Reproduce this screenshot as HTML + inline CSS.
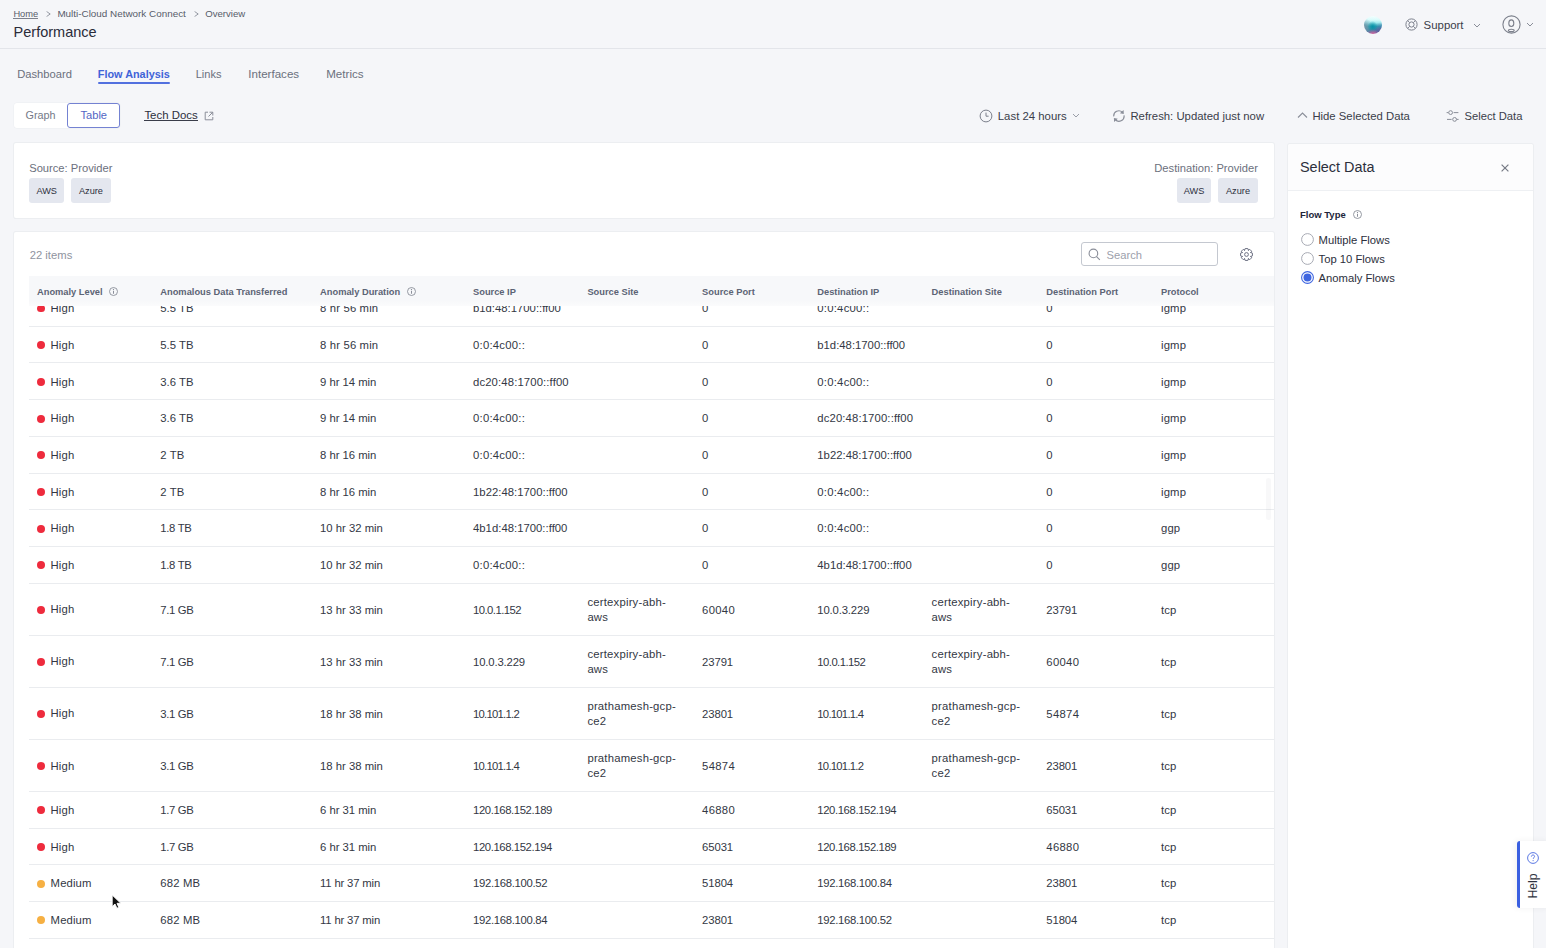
<!DOCTYPE html>
<html><head><meta charset="utf-8"><title>Performance</title>
<style>
html,body{margin:0;padding:0;}
body{width:1546px;height:948px;overflow:hidden;position:relative;background:#f5f6f9;font-family:"Liberation Sans", sans-serif;}
.t{position:absolute;white-space:nowrap;}
.b{position:absolute;}
</style></head><body>
<div class="t" style="left:13.40px;top:10.00px;font-size:9.3px;line-height:9.3px;color:#575c6a;font-weight:400;">Home</div>
<div class="b" style="left:13.40px;top:18.00px;width:24.90px;height:0.80px;background:#7d818c"></div>
<svg class="b" style="left:45.50px;top:10.60px" width="5" height="6" viewBox="0 0 5 6" fill="none"><path d="M0.6 0.5L4.2 3L0.6 5.5" stroke="#8a8f9a" stroke-width="0.9"/></svg>
<div class="t" style="left:57.40px;top:9.00px;font-size:9.89px;line-height:9.89px;color:#575c6a;font-weight:400;">Multi-Cloud Network Connect</div>
<svg class="b" style="left:193.60px;top:10.60px" width="5" height="6" viewBox="0 0 5 6" fill="none"><path d="M0.6 0.5L4.2 3L0.6 5.5" stroke="#8a8f9a" stroke-width="0.9"/></svg>
<div class="t" style="left:205.20px;top:9.00px;font-size:9.62px;line-height:9.62px;color:#575c6a;font-weight:400;">Overview</div>
<div class="t" style="left:13.60px;top:25.00px;font-size:14.5px;line-height:14.5px;color:#2a2c3a;font-weight:400;">Performance</div>
<div class="b" style="left:0.00px;top:48.00px;width:1546.00px;height:1.00px;background:#e3e5ea"></div>
<div class="b" style="left:1364px;top:16px;width:18px;height:18px;border-radius:50%;background:radial-gradient(circle at 50% 105%, #e3679c 0%, rgba(227,103,156,0) 28%),radial-gradient(ellipse at 48% 60%, #0890a6 0%, rgba(8,144,166,0) 38%),radial-gradient(circle at 0% 62%, #8095a8 0%, rgba(128,149,168,0) 42%),radial-gradient(circle at 100% 95%, #6a55a0 0%, rgba(106,85,160,0) 45%),linear-gradient(#f4ffff 0%, #d8fbfb 22%, #9fe9ee 38%, #22aab8 58%, #3a86a8 78%, #7067a5 100%)"></div>
<svg class="b" style="left:1404.50px;top:17.80px" width="13" height="13" viewBox="0 0 13 13" fill="none"><circle cx="6.5" cy="6.5" r="5.6" stroke="#7c808c" stroke-width="1"/><circle cx="6.5" cy="6.5" r="2.6" stroke="#7c808c" stroke-width="1"/><path d="M2.6 2.6L4.6 4.6M10.4 2.6L8.4 4.6M2.6 10.4L4.6 8.4M10.4 10.4L8.4 8.4" stroke="#7c808c" stroke-width="0.9"/></svg>
<div class="t" style="left:1423.60px;top:20.00px;font-size:11.42px;line-height:11.42px;color:#3a3d4a;font-weight:400;">Support</div>
<svg class="b" style="left:1472.50px;top:22.50px" width="8" height="5" viewBox="0 0 8 5" fill="none"><path d="M1 1L4 4L7 1" stroke="#8a8e99" stroke-width="1"/></svg>
<svg class="b" style="left:1501.50px;top:15.00px" width="19" height="19" viewBox="0 0 19 19" fill="none"><circle cx="9.5" cy="9.5" r="8.6" stroke="#7c808c" stroke-width="1.1"/><ellipse cx="9.3" cy="8.2" rx="2.5" ry="3.3" stroke="#7c808c" stroke-width="1.1"/><ellipse cx="9.3" cy="15.4" rx="2.9" ry="1.2" stroke="#7c808c" stroke-width="1.1"/></svg>
<svg class="b" style="left:1525.50px;top:21.80px" width="8" height="5" viewBox="0 0 8 5" fill="none"><path d="M1 1L4 4L7 1" stroke="#8a8e99" stroke-width="1"/></svg>
<div class="t" style="left:17.20px;top:69.00px;font-size:11.2px;line-height:11.2px;color:#6b707d;font-weight:400;">Dashboard</div>
<div class="t" style="left:97.80px;top:69.00px;font-size:10.86px;line-height:10.86px;color:#4063d8;font-weight:700;">Flow Analysis</div>
<div class="b" style="left:97.80px;top:82.30px;width:72.10px;height:2.00px;background:#5270df;border-radius:1px"></div>
<div class="t" style="left:195.70px;top:69.00px;font-size:11.05px;line-height:11.05px;color:#6b707d;font-weight:400;">Links</div>
<div class="t" style="left:248.30px;top:69.00px;font-size:11.59px;line-height:11.59px;color:#6b707d;font-weight:400;">Interfaces</div>
<div class="t" style="left:326.20px;top:68.00px;font-size:11.6px;line-height:11.6px;color:#6b707d;font-weight:400;">Metrics</div>
<div class="b" style="left:14.20px;top:103.20px;width:105.40px;height:24.40px;background:#fff;border-radius:3px;box-shadow:0 0 0 0.5px #eceef2"></div>
<div class="b" style="left:67.20px;top:103.20px;width:52.40px;height:24.40px;background:#fff;border:1px solid #7482d2;border-radius:3px;box-sizing:border-box"></div>
<div class="t" style="left:25.60px;top:110.00px;font-size:10.8px;line-height:10.8px;color:#747987;font-weight:400;">Graph</div>
<div class="t" style="left:80.40px;top:110.00px;font-size:11.17px;line-height:11.17px;color:#5366c4;font-weight:400;">Table</div>
<div class="t" style="left:144.40px;top:110.00px;font-size:11.42px;line-height:11.42px;color:#2c2f3c;font-weight:400;">Tech Docs</div>
<div class="b" style="left:144.40px;top:120.00px;width:53.40px;height:1.00px;background:#3a3d4a"></div>
<svg class="b" style="left:203.50px;top:110.80px" width="10" height="10" viewBox="0 0 10 10" fill="none"><path d="M4 1.2H1.2V8.8H8.8V6" stroke="#8a8e99" stroke-width="1"/><path d="M5.5 1.2H8.8V4.5M8.8 1.2L4.5 5.5" stroke="#8a8e99" stroke-width="1"/></svg>
<svg class="b" style="left:978.50px;top:108.80px" width="14" height="14" viewBox="0 0 14 14" fill="none"><circle cx="7" cy="7" r="5.9" stroke="#7c808c" stroke-width="1"/><path d="M7 3.6V7.2H9.6" stroke="#7c808c" stroke-width="1"/></svg>
<div class="t" style="left:997.80px;top:111.00px;font-size:11.39px;line-height:11.39px;color:#3a3d4a;font-weight:400;">Last 24 hours</div>
<svg class="b" style="left:1072.00px;top:113.00px" width="8" height="5" viewBox="0 0 8 5" fill="none"><path d="M1 1L4 4L7 1" stroke="#9a9ea8" stroke-width="1"/></svg>
<svg class="b" style="left:1111.50px;top:109.00px" width="14" height="14" viewBox="0 0 14 14" fill="none"><path d="M1.8 7.4A5 5 0 0 1 10.4 3.4M12 6.4A5 5 0 0 1 3.2 10.4" stroke="#8a8e99" stroke-width="1.2"/><path d="M11.6 0.9L11.8 4.9L7.9 4.3Z M2.1 13.1L1.9 9.1L5.8 9.7Z" fill="#8a8e99"/></svg>
<div class="t" style="left:1130.40px;top:111.00px;font-size:11.35px;line-height:11.35px;color:#3a3d4a;font-weight:400;">Refresh: Updated just now</div>
<svg class="b" style="left:1296.50px;top:112.00px" width="11" height="7" viewBox="0 0 11 7" fill="none"><path d="M1 5.5L5.5 1L10 5.5" stroke="#8a8e99" stroke-width="1.1"/></svg>
<div class="t" style="left:1312.40px;top:111.00px;font-size:11.32px;line-height:11.32px;color:#3a3d4a;font-weight:400;">Hide Selected Data</div>
<svg class="b" style="left:1445.50px;top:108.80px" width="14" height="14" viewBox="0 0 14 14" fill="none"><circle cx="4.6" cy="3.6" r="1.9" stroke="#8a8e99" stroke-width="1"/><circle cx="8.6" cy="10.4" r="1.9" stroke="#8a8e99" stroke-width="1"/><path d="M7.6 3.6H12.4M1 10.4H5.6M0.6 3.6H2.4M10.8 10.4H12.6" stroke="#8a8e99" stroke-width="1"/></svg>
<div class="t" style="left:1464.60px;top:111.00px;font-size:11.2px;line-height:11.2px;color:#3a3d4a;font-weight:400;">Select Data</div>
<div class="b" style="left:14.00px;top:143.30px;width:1260.00px;height:74.80px;background:#fff;border-radius:2px;box-shadow:0 0 0 1px #eceef1, 0 1px 0 0 #e4e6ea"></div>
<div class="t" style="left:29.20px;top:163.00px;font-size:11.18px;line-height:11.18px;color:#6b707d;font-weight:400;">Source: Provider</div>
<div class="b" style="left:29.20px;top:178.30px;width:35.00px;height:24.30px;background:#e4e7ef;border-radius:3px"></div>
<div class="t" style="left:-53.30px;width:200px;text-align:center;top:187.00px;font-size:9.2px;line-height:9.2px;color:#2d3040;font-weight:400;">AWS</div>
<div class="b" style="left:70.90px;top:178.30px;width:40.10px;height:24.30px;background:#e4e7ef;border-radius:3px"></div>
<div class="t" style="left:-9.05px;width:200px;text-align:center;top:187.00px;font-size:9.2px;line-height:9.2px;color:#2d3040;font-weight:400;">Azure</div>
<div class="t" style="right:288.00px;top:163.00px;font-size:11.18px;line-height:11.18px;color:#6b707d;font-weight:400;">Destination: Provider</div>
<div class="b" style="left:1176.70px;top:178.30px;width:34.70px;height:24.30px;background:#e4e7ef;border-radius:3px"></div>
<div class="t" style="left:1094.05px;width:200px;text-align:center;top:187.00px;font-size:9.2px;line-height:9.2px;color:#2d3040;font-weight:400;">AWS</div>
<div class="b" style="left:1217.80px;top:178.30px;width:40.40px;height:24.30px;background:#e4e7ef;border-radius:3px"></div>
<div class="t" style="left:1138.00px;width:200px;text-align:center;top:187.00px;font-size:9.2px;line-height:9.2px;color:#2d3040;font-weight:400;">Azure</div>
<div class="b" style="left:14.00px;top:231.60px;width:1260.00px;height:728.40px;background:#fff;border-radius:2px;box-shadow:0 0 0 1px #eceef1, 0 -0.5px 0 0 #e6e8ec"></div>
<div class="t" style="left:29.70px;top:250.00px;font-size:11.27px;line-height:11.27px;color:#8f94a0;font-weight:400;">22 items</div>
<div class="b" style="left:1081.10px;top:242.00px;width:137.30px;height:23.80px;background:#fff;border:1px solid #c4c8d0;border-radius:3px;box-sizing:border-box"></div>
<svg class="b" style="left:1087.50px;top:248.00px" width="13" height="13" viewBox="0 0 13 13" fill="none"><circle cx="5.4" cy="5.4" r="4.3" stroke="#8a8e99" stroke-width="1.1"/><path d="M8.6 8.6L11.8 11.8" stroke="#8a8e99" stroke-width="1.1"/></svg>
<div class="t" style="left:1106.50px;top:250.00px;font-size:11.2px;line-height:11.2px;color:#9ca0ab;font-weight:400;">Search</div>
<svg class="b" style="left:1240.00px;top:248.00px" width="13" height="13" viewBox="0 0 13 13" fill="none"><path d="M10.55 4.54 L12.45 5.17 L12.45 7.83 L10.55 8.46 L10.75 7.98 L11.65 9.77 L9.77 11.65 L7.98 10.75 L8.46 10.55 L7.83 12.45 L5.17 12.45 L4.54 10.55 L5.02 10.75 L3.23 11.65 L1.35 9.77 L2.25 7.98 L2.45 8.46 L0.55 7.83 L0.55 5.17 L2.45 4.54 L2.25 5.02 L1.35 3.23 L3.23 1.35 L5.02 2.25 L4.54 2.45 L5.17 0.55 L7.83 0.55 L8.46 2.45 L7.98 2.25 L9.77 1.35 L11.65 3.23 L10.75 5.02Z" stroke="#6f7385" stroke-width="1" stroke-linejoin="round"/><circle cx="6.5" cy="6.5" r="1.9" stroke="#6f7385" stroke-width="1"/></svg>
<div class="b" style="left:36.90px;top:304.59px;width:7.90px;height:7.90px;background:#ee2b3d;border-radius:50%"></div>
<div class="t" style="left:50.60px;top:303.00px;font-size:11.3px;line-height:11.3px;color:#333744;font-weight:400;letter-spacing:0.112px">High</div>
<div class="t" style="left:160.30px;top:303.00px;font-size:11.3px;line-height:11.3px;color:#333744;font-weight:400;letter-spacing:0.017px">5.5 TB</div>
<div class="t" style="left:320.10px;top:303.00px;font-size:11.3px;line-height:11.3px;color:#333744;font-weight:400;letter-spacing:0.150px">8 hr 56 min</div>
<div class="t" style="left:473.00px;top:303.00px;font-size:11.3px;line-height:11.3px;color:#333744;font-weight:400;letter-spacing:0.006px">b1d:48:1700::ff00</div>
<div class="t" style="left:702.10px;top:303.00px;font-size:11.3px;line-height:11.3px;color:#333744;font-weight:400;letter-spacing:0.300px">0</div>
<div class="t" style="left:817.30px;top:303.00px;font-size:11.3px;line-height:11.3px;color:#333744;font-weight:400;letter-spacing:0.245px">0:0:4c00::</div>
<div class="t" style="left:1046.30px;top:303.00px;font-size:11.3px;line-height:11.3px;color:#333744;font-weight:400;letter-spacing:0.300px">0</div>
<div class="t" style="left:1161.00px;top:303.00px;font-size:11.3px;line-height:11.3px;color:#333744;font-weight:400;letter-spacing:0.150px">igmp</div>
<div class="b" style="left:29.30px;top:325.78px;width:1244.70px;height:1.00px;background:#eaecef"></div>
<div class="b" style="left:36.90px;top:341.27px;width:7.90px;height:7.90px;background:#ee2b3d;border-radius:50%"></div>
<div class="t" style="left:50.60px;top:340.00px;font-size:11.3px;line-height:11.3px;color:#333744;font-weight:400;letter-spacing:0.112px">High</div>
<div class="t" style="left:160.30px;top:340.00px;font-size:11.3px;line-height:11.3px;color:#333744;font-weight:400;letter-spacing:0.017px">5.5 TB</div>
<div class="t" style="left:320.10px;top:340.00px;font-size:11.3px;line-height:11.3px;color:#333744;font-weight:400;letter-spacing:0.150px">8 hr 56 min</div>
<div class="t" style="left:473.00px;top:340.00px;font-size:11.3px;line-height:11.3px;color:#333744;font-weight:400;letter-spacing:0.245px">0:0:4c00::</div>
<div class="t" style="left:702.10px;top:340.00px;font-size:11.3px;line-height:11.3px;color:#333744;font-weight:400;letter-spacing:0.300px">0</div>
<div class="t" style="left:817.30px;top:340.00px;font-size:11.3px;line-height:11.3px;color:#333744;font-weight:400;letter-spacing:0.006px">b1d:48:1700::ff00</div>
<div class="t" style="left:1046.30px;top:340.00px;font-size:11.3px;line-height:11.3px;color:#333744;font-weight:400;letter-spacing:0.300px">0</div>
<div class="t" style="left:1161.00px;top:340.00px;font-size:11.3px;line-height:11.3px;color:#333744;font-weight:400;letter-spacing:0.150px">igmp</div>
<div class="b" style="left:29.30px;top:362.46px;width:1244.70px;height:1.00px;background:#eaecef"></div>
<div class="b" style="left:36.90px;top:377.95px;width:7.90px;height:7.90px;background:#ee2b3d;border-radius:50%"></div>
<div class="t" style="left:50.60px;top:377.00px;font-size:11.3px;line-height:11.3px;color:#333744;font-weight:400;letter-spacing:0.112px">High</div>
<div class="t" style="left:160.30px;top:377.00px;font-size:11.3px;line-height:11.3px;color:#333744;font-weight:400;letter-spacing:0.017px">3.6 TB</div>
<div class="t" style="left:320.10px;top:377.00px;font-size:11.3px;line-height:11.3px;color:#333744;font-weight:400;letter-spacing:-0.032px">9 hr 14 min</div>
<div class="t" style="left:473.00px;top:377.00px;font-size:11.3px;line-height:11.3px;color:#333744;font-weight:400;letter-spacing:0.133px">dc20:48:1700::ff00</div>
<div class="t" style="left:702.10px;top:377.00px;font-size:11.3px;line-height:11.3px;color:#333744;font-weight:400;letter-spacing:0.300px">0</div>
<div class="t" style="left:817.30px;top:377.00px;font-size:11.3px;line-height:11.3px;color:#333744;font-weight:400;letter-spacing:0.245px">0:0:4c00::</div>
<div class="t" style="left:1046.30px;top:377.00px;font-size:11.3px;line-height:11.3px;color:#333744;font-weight:400;letter-spacing:0.300px">0</div>
<div class="t" style="left:1161.00px;top:377.00px;font-size:11.3px;line-height:11.3px;color:#333744;font-weight:400;letter-spacing:0.150px">igmp</div>
<div class="b" style="left:29.30px;top:399.14px;width:1244.70px;height:1.00px;background:#eaecef"></div>
<div class="b" style="left:36.90px;top:414.63px;width:7.90px;height:7.90px;background:#ee2b3d;border-radius:50%"></div>
<div class="t" style="left:50.60px;top:413.00px;font-size:11.3px;line-height:11.3px;color:#333744;font-weight:400;letter-spacing:0.112px">High</div>
<div class="t" style="left:160.30px;top:413.00px;font-size:11.3px;line-height:11.3px;color:#333744;font-weight:400;letter-spacing:0.017px">3.6 TB</div>
<div class="t" style="left:320.10px;top:413.00px;font-size:11.3px;line-height:11.3px;color:#333744;font-weight:400;letter-spacing:-0.032px">9 hr 14 min</div>
<div class="t" style="left:473.00px;top:413.00px;font-size:11.3px;line-height:11.3px;color:#333744;font-weight:400;letter-spacing:0.245px">0:0:4c00::</div>
<div class="t" style="left:702.10px;top:413.00px;font-size:11.3px;line-height:11.3px;color:#333744;font-weight:400;letter-spacing:0.300px">0</div>
<div class="t" style="left:817.30px;top:413.00px;font-size:11.3px;line-height:11.3px;color:#333744;font-weight:400;letter-spacing:0.133px">dc20:48:1700::ff00</div>
<div class="t" style="left:1046.30px;top:413.00px;font-size:11.3px;line-height:11.3px;color:#333744;font-weight:400;letter-spacing:0.300px">0</div>
<div class="t" style="left:1161.00px;top:413.00px;font-size:11.3px;line-height:11.3px;color:#333744;font-weight:400;letter-spacing:0.150px">igmp</div>
<div class="b" style="left:29.30px;top:435.82px;width:1244.70px;height:1.00px;background:#eaecef"></div>
<div class="b" style="left:36.90px;top:451.31px;width:7.90px;height:7.90px;background:#ee2b3d;border-radius:50%"></div>
<div class="t" style="left:50.60px;top:450.00px;font-size:11.3px;line-height:11.3px;color:#333744;font-weight:400;letter-spacing:0.112px">High</div>
<div class="t" style="left:160.30px;top:450.00px;font-size:11.3px;line-height:11.3px;color:#333744;font-weight:400;letter-spacing:0.075px">2 TB</div>
<div class="t" style="left:320.10px;top:450.00px;font-size:11.3px;line-height:11.3px;color:#333744;font-weight:400;letter-spacing:-0.032px">8 hr 16 min</div>
<div class="t" style="left:473.00px;top:450.00px;font-size:11.3px;line-height:11.3px;color:#333744;font-weight:400;letter-spacing:0.245px">0:0:4c00::</div>
<div class="t" style="left:702.10px;top:450.00px;font-size:11.3px;line-height:11.3px;color:#333744;font-weight:400;letter-spacing:0.300px">0</div>
<div class="t" style="left:817.30px;top:450.00px;font-size:11.3px;line-height:11.3px;color:#333744;font-weight:400;letter-spacing:0.031px">1b22:48:1700::ff00</div>
<div class="t" style="left:1046.30px;top:450.00px;font-size:11.3px;line-height:11.3px;color:#333744;font-weight:400;letter-spacing:0.300px">0</div>
<div class="t" style="left:1161.00px;top:450.00px;font-size:11.3px;line-height:11.3px;color:#333744;font-weight:400;letter-spacing:0.150px">igmp</div>
<div class="b" style="left:29.30px;top:472.50px;width:1244.70px;height:1.00px;background:#eaecef"></div>
<div class="b" style="left:36.90px;top:487.99px;width:7.90px;height:7.90px;background:#ee2b3d;border-radius:50%"></div>
<div class="t" style="left:50.60px;top:487.00px;font-size:11.3px;line-height:11.3px;color:#333744;font-weight:400;letter-spacing:0.112px">High</div>
<div class="t" style="left:160.30px;top:487.00px;font-size:11.3px;line-height:11.3px;color:#333744;font-weight:400;letter-spacing:0.075px">2 TB</div>
<div class="t" style="left:320.10px;top:487.00px;font-size:11.3px;line-height:11.3px;color:#333744;font-weight:400;letter-spacing:-0.032px">8 hr 16 min</div>
<div class="t" style="left:473.00px;top:487.00px;font-size:11.3px;line-height:11.3px;color:#333744;font-weight:400;letter-spacing:0.031px">1b22:48:1700::ff00</div>
<div class="t" style="left:702.10px;top:487.00px;font-size:11.3px;line-height:11.3px;color:#333744;font-weight:400;letter-spacing:0.300px">0</div>
<div class="t" style="left:817.30px;top:487.00px;font-size:11.3px;line-height:11.3px;color:#333744;font-weight:400;letter-spacing:0.245px">0:0:4c00::</div>
<div class="t" style="left:1046.30px;top:487.00px;font-size:11.3px;line-height:11.3px;color:#333744;font-weight:400;letter-spacing:0.300px">0</div>
<div class="t" style="left:1161.00px;top:487.00px;font-size:11.3px;line-height:11.3px;color:#333744;font-weight:400;letter-spacing:0.150px">igmp</div>
<div class="b" style="left:29.30px;top:509.18px;width:1244.70px;height:1.00px;background:#eaecef"></div>
<div class="b" style="left:36.90px;top:524.67px;width:7.90px;height:7.90px;background:#ee2b3d;border-radius:50%"></div>
<div class="t" style="left:50.60px;top:523.00px;font-size:11.3px;line-height:11.3px;color:#333744;font-weight:400;letter-spacing:0.112px">High</div>
<div class="t" style="left:160.30px;top:523.00px;font-size:11.3px;line-height:11.3px;color:#333744;font-weight:400;letter-spacing:-0.317px">1.8 TB</div>
<div class="t" style="left:320.10px;top:523.00px;font-size:11.3px;line-height:11.3px;color:#333744;font-weight:400;letter-spacing:-0.004px">10 hr 32 min</div>
<div class="t" style="left:473.00px;top:523.00px;font-size:11.3px;line-height:11.3px;color:#333744;font-weight:400;letter-spacing:0.022px">4b1d:48:1700::ff00</div>
<div class="t" style="left:702.10px;top:523.00px;font-size:11.3px;line-height:11.3px;color:#333744;font-weight:400;letter-spacing:0.300px">0</div>
<div class="t" style="left:817.30px;top:523.00px;font-size:11.3px;line-height:11.3px;color:#333744;font-weight:400;letter-spacing:0.245px">0:0:4c00::</div>
<div class="t" style="left:1046.30px;top:523.00px;font-size:11.3px;line-height:11.3px;color:#333744;font-weight:400;letter-spacing:0.300px">0</div>
<div class="t" style="left:1161.00px;top:523.00px;font-size:11.3px;line-height:11.3px;color:#333744;font-weight:400;letter-spacing:0.150px">ggp</div>
<div class="b" style="left:29.30px;top:545.86px;width:1244.70px;height:1.00px;background:#eaecef"></div>
<div class="b" style="left:36.90px;top:561.35px;width:7.90px;height:7.90px;background:#ee2b3d;border-radius:50%"></div>
<div class="t" style="left:50.60px;top:560.00px;font-size:11.3px;line-height:11.3px;color:#333744;font-weight:400;letter-spacing:0.112px">High</div>
<div class="t" style="left:160.30px;top:560.00px;font-size:11.3px;line-height:11.3px;color:#333744;font-weight:400;letter-spacing:-0.317px">1.8 TB</div>
<div class="t" style="left:320.10px;top:560.00px;font-size:11.3px;line-height:11.3px;color:#333744;font-weight:400;letter-spacing:-0.004px">10 hr 32 min</div>
<div class="t" style="left:473.00px;top:560.00px;font-size:11.3px;line-height:11.3px;color:#333744;font-weight:400;letter-spacing:0.245px">0:0:4c00::</div>
<div class="t" style="left:702.10px;top:560.00px;font-size:11.3px;line-height:11.3px;color:#333744;font-weight:400;letter-spacing:0.300px">0</div>
<div class="t" style="left:817.30px;top:560.00px;font-size:11.3px;line-height:11.3px;color:#333744;font-weight:400;letter-spacing:0.022px">4b1d:48:1700::ff00</div>
<div class="t" style="left:1046.30px;top:560.00px;font-size:11.3px;line-height:11.3px;color:#333744;font-weight:400;letter-spacing:0.300px">0</div>
<div class="t" style="left:1161.00px;top:560.00px;font-size:11.3px;line-height:11.3px;color:#333744;font-weight:400;letter-spacing:0.150px">ggp</div>
<div class="b" style="left:29.30px;top:582.54px;width:1244.70px;height:1.00px;background:#eaecef"></div>
<div class="b" style="left:36.90px;top:605.72px;width:7.90px;height:7.90px;background:#ee2b3d;border-radius:50%"></div>
<div class="t" style="left:50.60px;top:604.00px;font-size:11.3px;line-height:11.3px;color:#333744;font-weight:400;letter-spacing:0.112px">High</div>
<div class="t" style="left:160.30px;top:605.00px;font-size:11.3px;line-height:11.3px;color:#333744;font-weight:400;letter-spacing:-0.317px">7.1 GB</div>
<div class="t" style="left:320.10px;top:605.00px;font-size:11.3px;line-height:11.3px;color:#333744;font-weight:400;letter-spacing:-0.004px">13 hr 33 min</div>
<div class="t" style="left:473.00px;top:605.00px;font-size:11.3px;line-height:11.3px;color:#333744;font-weight:400;letter-spacing:-0.540px">10.0.1.152</div>
<div class="t" style="left:587.40px;top:597.00px;font-size:11.3px;line-height:11.3px;color:#333744;font-weight:400;letter-spacing:0.210px">certexpiry-abh-</div>
<div class="t" style="left:587.40px;top:612.00px;font-size:11.3px;line-height:11.3px;color:#333744;font-weight:400;letter-spacing:0.150px">aws</div>
<div class="t" style="left:702.10px;top:605.00px;font-size:11.3px;line-height:11.3px;color:#333744;font-weight:400;letter-spacing:0.300px">60040</div>
<div class="t" style="left:817.30px;top:605.00px;font-size:11.3px;line-height:11.3px;color:#333744;font-weight:400;letter-spacing:-0.140px">10.0.3.229</div>
<div class="t" style="left:931.60px;top:597.00px;font-size:11.3px;line-height:11.3px;color:#333744;font-weight:400;letter-spacing:0.210px">certexpiry-abh-</div>
<div class="t" style="left:931.60px;top:612.00px;font-size:11.3px;line-height:11.3px;color:#333744;font-weight:400;letter-spacing:0.150px">aws</div>
<div class="t" style="left:1046.30px;top:605.00px;font-size:11.3px;line-height:11.3px;color:#333744;font-weight:400;letter-spacing:-0.100px">23791</div>
<div class="t" style="left:1161.00px;top:605.00px;font-size:11.3px;line-height:11.3px;color:#333744;font-weight:400;letter-spacing:0.150px">tcp</div>
<div class="b" style="left:29.30px;top:634.61px;width:1244.70px;height:1.00px;background:#eaecef"></div>
<div class="b" style="left:36.90px;top:657.79px;width:7.90px;height:7.90px;background:#ee2b3d;border-radius:50%"></div>
<div class="t" style="left:50.60px;top:656.00px;font-size:11.3px;line-height:11.3px;color:#333744;font-weight:400;letter-spacing:0.112px">High</div>
<div class="t" style="left:160.30px;top:657.00px;font-size:11.3px;line-height:11.3px;color:#333744;font-weight:400;letter-spacing:-0.317px">7.1 GB</div>
<div class="t" style="left:320.10px;top:657.00px;font-size:11.3px;line-height:11.3px;color:#333744;font-weight:400;letter-spacing:-0.004px">13 hr 33 min</div>
<div class="t" style="left:473.00px;top:657.00px;font-size:11.3px;line-height:11.3px;color:#333744;font-weight:400;letter-spacing:-0.140px">10.0.3.229</div>
<div class="t" style="left:587.40px;top:649.00px;font-size:11.3px;line-height:11.3px;color:#333744;font-weight:400;letter-spacing:0.210px">certexpiry-abh-</div>
<div class="t" style="left:587.40px;top:664.00px;font-size:11.3px;line-height:11.3px;color:#333744;font-weight:400;letter-spacing:0.150px">aws</div>
<div class="t" style="left:702.10px;top:657.00px;font-size:11.3px;line-height:11.3px;color:#333744;font-weight:400;letter-spacing:-0.100px">23791</div>
<div class="t" style="left:817.30px;top:657.00px;font-size:11.3px;line-height:11.3px;color:#333744;font-weight:400;letter-spacing:-0.540px">10.0.1.152</div>
<div class="t" style="left:931.60px;top:649.00px;font-size:11.3px;line-height:11.3px;color:#333744;font-weight:400;letter-spacing:0.210px">certexpiry-abh-</div>
<div class="t" style="left:931.60px;top:664.00px;font-size:11.3px;line-height:11.3px;color:#333744;font-weight:400;letter-spacing:0.150px">aws</div>
<div class="t" style="left:1046.30px;top:657.00px;font-size:11.3px;line-height:11.3px;color:#333744;font-weight:400;letter-spacing:0.300px">60040</div>
<div class="t" style="left:1161.00px;top:657.00px;font-size:11.3px;line-height:11.3px;color:#333744;font-weight:400;letter-spacing:0.150px">tcp</div>
<div class="b" style="left:29.30px;top:686.68px;width:1244.70px;height:1.00px;background:#eaecef"></div>
<div class="b" style="left:36.90px;top:709.87px;width:7.90px;height:7.90px;background:#ee2b3d;border-radius:50%"></div>
<div class="t" style="left:50.60px;top:708.00px;font-size:11.3px;line-height:11.3px;color:#333744;font-weight:400;letter-spacing:0.112px">High</div>
<div class="t" style="left:160.30px;top:709.00px;font-size:11.3px;line-height:11.3px;color:#333744;font-weight:400;letter-spacing:-0.317px">3.1 GB</div>
<div class="t" style="left:320.10px;top:709.00px;font-size:11.3px;line-height:11.3px;color:#333744;font-weight:400;letter-spacing:-0.004px">18 hr 38 min</div>
<div class="t" style="left:473.00px;top:709.00px;font-size:11.3px;line-height:11.3px;color:#333744;font-weight:400;letter-spacing:-0.740px">10.101.1.2</div>
<div class="t" style="left:587.40px;top:701.00px;font-size:11.3px;line-height:11.3px;color:#333744;font-weight:400;letter-spacing:0.210px">prathamesh-gcp-</div>
<div class="t" style="left:587.40px;top:716.00px;font-size:11.3px;line-height:11.3px;color:#333744;font-weight:400;letter-spacing:0.200px">ce2</div>
<div class="t" style="left:702.10px;top:709.00px;font-size:11.3px;line-height:11.3px;color:#333744;font-weight:400;letter-spacing:-0.100px">23801</div>
<div class="t" style="left:817.30px;top:709.00px;font-size:11.3px;line-height:11.3px;color:#333744;font-weight:400;letter-spacing:-0.740px">10.101.1.4</div>
<div class="t" style="left:931.60px;top:701.00px;font-size:11.3px;line-height:11.3px;color:#333744;font-weight:400;letter-spacing:0.210px">prathamesh-gcp-</div>
<div class="t" style="left:931.60px;top:716.00px;font-size:11.3px;line-height:11.3px;color:#333744;font-weight:400;letter-spacing:0.200px">ce2</div>
<div class="t" style="left:1046.30px;top:709.00px;font-size:11.3px;line-height:11.3px;color:#333744;font-weight:400;letter-spacing:0.300px">54874</div>
<div class="t" style="left:1161.00px;top:709.00px;font-size:11.3px;line-height:11.3px;color:#333744;font-weight:400;letter-spacing:0.150px">tcp</div>
<div class="b" style="left:29.30px;top:738.75px;width:1244.70px;height:1.00px;background:#eaecef"></div>
<div class="b" style="left:36.90px;top:761.94px;width:7.90px;height:7.90px;background:#ee2b3d;border-radius:50%"></div>
<div class="t" style="left:50.60px;top:761.00px;font-size:11.3px;line-height:11.3px;color:#333744;font-weight:400;letter-spacing:0.112px">High</div>
<div class="t" style="left:160.30px;top:761.00px;font-size:11.3px;line-height:11.3px;color:#333744;font-weight:400;letter-spacing:-0.317px">3.1 GB</div>
<div class="t" style="left:320.10px;top:761.00px;font-size:11.3px;line-height:11.3px;color:#333744;font-weight:400;letter-spacing:-0.004px">18 hr 38 min</div>
<div class="t" style="left:473.00px;top:761.00px;font-size:11.3px;line-height:11.3px;color:#333744;font-weight:400;letter-spacing:-0.740px">10.101.1.4</div>
<div class="t" style="left:587.40px;top:753.00px;font-size:11.3px;line-height:11.3px;color:#333744;font-weight:400;letter-spacing:0.210px">prathamesh-gcp-</div>
<div class="t" style="left:587.40px;top:768.00px;font-size:11.3px;line-height:11.3px;color:#333744;font-weight:400;letter-spacing:0.200px">ce2</div>
<div class="t" style="left:702.10px;top:761.00px;font-size:11.3px;line-height:11.3px;color:#333744;font-weight:400;letter-spacing:0.300px">54874</div>
<div class="t" style="left:817.30px;top:761.00px;font-size:11.3px;line-height:11.3px;color:#333744;font-weight:400;letter-spacing:-0.740px">10.101.1.2</div>
<div class="t" style="left:931.60px;top:753.00px;font-size:11.3px;line-height:11.3px;color:#333744;font-weight:400;letter-spacing:0.210px">prathamesh-gcp-</div>
<div class="t" style="left:931.60px;top:768.00px;font-size:11.3px;line-height:11.3px;color:#333744;font-weight:400;letter-spacing:0.200px">ce2</div>
<div class="t" style="left:1046.30px;top:761.00px;font-size:11.3px;line-height:11.3px;color:#333744;font-weight:400;letter-spacing:-0.100px">23801</div>
<div class="t" style="left:1161.00px;top:761.00px;font-size:11.3px;line-height:11.3px;color:#333744;font-weight:400;letter-spacing:0.150px">tcp</div>
<div class="b" style="left:29.30px;top:790.82px;width:1244.70px;height:1.00px;background:#eaecef"></div>
<div class="b" style="left:36.90px;top:806.31px;width:7.90px;height:7.90px;background:#ee2b3d;border-radius:50%"></div>
<div class="t" style="left:50.60px;top:805.00px;font-size:11.3px;line-height:11.3px;color:#333744;font-weight:400;letter-spacing:0.112px">High</div>
<div class="t" style="left:160.30px;top:805.00px;font-size:11.3px;line-height:11.3px;color:#333744;font-weight:400;letter-spacing:-0.317px">1.7 GB</div>
<div class="t" style="left:320.10px;top:805.00px;font-size:11.3px;line-height:11.3px;color:#333744;font-weight:400;letter-spacing:-0.032px">6 hr 31 min</div>
<div class="t" style="left:473.00px;top:805.00px;font-size:11.3px;line-height:11.3px;color:#333744;font-weight:400;letter-spacing:-0.393px">120.168.152.189</div>
<div class="t" style="left:702.10px;top:805.00px;font-size:11.3px;line-height:11.3px;color:#333744;font-weight:400;letter-spacing:0.300px">46880</div>
<div class="t" style="left:817.30px;top:805.00px;font-size:11.3px;line-height:11.3px;color:#333744;font-weight:400;letter-spacing:-0.393px">120.168.152.194</div>
<div class="t" style="left:1046.30px;top:805.00px;font-size:11.3px;line-height:11.3px;color:#333744;font-weight:400;letter-spacing:-0.100px">65031</div>
<div class="t" style="left:1161.00px;top:805.00px;font-size:11.3px;line-height:11.3px;color:#333744;font-weight:400;letter-spacing:0.150px">tcp</div>
<div class="b" style="left:29.30px;top:827.50px;width:1244.70px;height:1.00px;background:#eaecef"></div>
<div class="b" style="left:36.90px;top:842.99px;width:7.90px;height:7.90px;background:#ee2b3d;border-radius:50%"></div>
<div class="t" style="left:50.60px;top:842.00px;font-size:11.3px;line-height:11.3px;color:#333744;font-weight:400;letter-spacing:0.112px">High</div>
<div class="t" style="left:160.30px;top:842.00px;font-size:11.3px;line-height:11.3px;color:#333744;font-weight:400;letter-spacing:-0.317px">1.7 GB</div>
<div class="t" style="left:320.10px;top:842.00px;font-size:11.3px;line-height:11.3px;color:#333744;font-weight:400;letter-spacing:-0.032px">6 hr 31 min</div>
<div class="t" style="left:473.00px;top:842.00px;font-size:11.3px;line-height:11.3px;color:#333744;font-weight:400;letter-spacing:-0.393px">120.168.152.194</div>
<div class="t" style="left:702.10px;top:842.00px;font-size:11.3px;line-height:11.3px;color:#333744;font-weight:400;letter-spacing:-0.100px">65031</div>
<div class="t" style="left:817.30px;top:842.00px;font-size:11.3px;line-height:11.3px;color:#333744;font-weight:400;letter-spacing:-0.393px">120.168.152.189</div>
<div class="t" style="left:1046.30px;top:842.00px;font-size:11.3px;line-height:11.3px;color:#333744;font-weight:400;letter-spacing:0.300px">46880</div>
<div class="t" style="left:1161.00px;top:842.00px;font-size:11.3px;line-height:11.3px;color:#333744;font-weight:400;letter-spacing:0.150px">tcp</div>
<div class="b" style="left:29.30px;top:864.18px;width:1244.70px;height:1.00px;background:#eaecef"></div>
<div class="b" style="left:36.90px;top:879.67px;width:7.90px;height:7.90px;background:#f6b043;border-radius:50%"></div>
<div class="t" style="left:50.60px;top:878.00px;font-size:11.3px;line-height:11.3px;color:#333744;font-weight:400;letter-spacing:0.125px">Medium</div>
<div class="t" style="left:160.30px;top:878.00px;font-size:11.3px;line-height:11.3px;color:#333744;font-weight:400;letter-spacing:0.150px">682 MB</div>
<div class="t" style="left:320.10px;top:878.00px;font-size:11.3px;line-height:11.3px;color:#333744;font-weight:400;letter-spacing:-0.171px">11 hr 37 min</div>
<div class="t" style="left:473.00px;top:878.00px;font-size:11.3px;line-height:11.3px;color:#333744;font-weight:400;letter-spacing:-0.300px">192.168.100.52</div>
<div class="t" style="left:702.10px;top:878.00px;font-size:11.3px;line-height:11.3px;color:#333744;font-weight:400;letter-spacing:-0.100px">51804</div>
<div class="t" style="left:817.30px;top:878.00px;font-size:11.3px;line-height:11.3px;color:#333744;font-weight:400;letter-spacing:-0.300px">192.168.100.84</div>
<div class="t" style="left:1046.30px;top:878.00px;font-size:11.3px;line-height:11.3px;color:#333744;font-weight:400;letter-spacing:-0.100px">23801</div>
<div class="t" style="left:1161.00px;top:878.00px;font-size:11.3px;line-height:11.3px;color:#333744;font-weight:400;letter-spacing:0.150px">tcp</div>
<div class="b" style="left:29.30px;top:900.86px;width:1244.70px;height:1.00px;background:#eaecef"></div>
<div class="b" style="left:36.90px;top:916.35px;width:7.90px;height:7.90px;background:#f6b043;border-radius:50%"></div>
<div class="t" style="left:50.60px;top:915.00px;font-size:11.3px;line-height:11.3px;color:#333744;font-weight:400;letter-spacing:0.125px">Medium</div>
<div class="t" style="left:160.30px;top:915.00px;font-size:11.3px;line-height:11.3px;color:#333744;font-weight:400;letter-spacing:0.150px">682 MB</div>
<div class="t" style="left:320.10px;top:915.00px;font-size:11.3px;line-height:11.3px;color:#333744;font-weight:400;letter-spacing:-0.171px">11 hr 37 min</div>
<div class="t" style="left:473.00px;top:915.00px;font-size:11.3px;line-height:11.3px;color:#333744;font-weight:400;letter-spacing:-0.300px">192.168.100.84</div>
<div class="t" style="left:702.10px;top:915.00px;font-size:11.3px;line-height:11.3px;color:#333744;font-weight:400;letter-spacing:-0.100px">23801</div>
<div class="t" style="left:817.30px;top:915.00px;font-size:11.3px;line-height:11.3px;color:#333744;font-weight:400;letter-spacing:-0.300px">192.168.100.52</div>
<div class="t" style="left:1046.30px;top:915.00px;font-size:11.3px;line-height:11.3px;color:#333744;font-weight:400;letter-spacing:-0.100px">51804</div>
<div class="t" style="left:1161.00px;top:915.00px;font-size:11.3px;line-height:11.3px;color:#333744;font-weight:400;letter-spacing:0.150px">tcp</div>
<div class="b" style="left:29.30px;top:937.54px;width:1244.70px;height:1.00px;background:#eaecef"></div>
<div class="b" style="left:36.90px;top:953.03px;width:7.90px;height:7.90px;background:#f6b043;border-radius:50%"></div>
<div class="t" style="left:50.60px;top:952.00px;font-size:11.3px;line-height:11.3px;color:#333744;font-weight:400;letter-spacing:0.125px">Medium</div>
<div class="t" style="left:160.30px;top:952.00px;font-size:11.3px;line-height:11.3px;color:#333744;font-weight:400;letter-spacing:0.150px">682 MB</div>
<div class="t" style="left:320.10px;top:952.00px;font-size:11.3px;line-height:11.3px;color:#333744;font-weight:400;letter-spacing:-0.171px">11 hr 37 min</div>
<div class="t" style="left:473.00px;top:952.00px;font-size:11.3px;line-height:11.3px;color:#333744;font-weight:400;letter-spacing:-0.300px">192.168.100.84</div>
<div class="t" style="left:702.10px;top:952.00px;font-size:11.3px;line-height:11.3px;color:#333744;font-weight:400;letter-spacing:-0.100px">23801</div>
<div class="t" style="left:817.30px;top:952.00px;font-size:11.3px;line-height:11.3px;color:#333744;font-weight:400;letter-spacing:-0.300px">192.168.100.52</div>
<div class="t" style="left:1046.30px;top:952.00px;font-size:11.3px;line-height:11.3px;color:#333744;font-weight:400;letter-spacing:-0.100px">51804</div>
<div class="t" style="left:1161.00px;top:952.00px;font-size:11.3px;line-height:11.3px;color:#333744;font-weight:400;letter-spacing:0.150px">tcp</div>
<div class="b" style="left:29.30px;top:974.22px;width:1244.70px;height:1.00px;background:#eaecef"></div>
<div class="b" style="left:1265.50px;top:478.00px;width:5.50px;height:42.00px;background:rgba(120,125,140,0.05);border-radius:3px"></div>
<div class="b" style="left:28.50px;top:276.00px;width:1245.50px;height:29.60px;background:linear-gradient(#f7f8fa 0%, #f7f8fa 82%, #fbfbfc 100%)"></div>
<div class="t" style="left:37.00px;top:288.00px;font-size:9.3px;line-height:9.3px;color:#5c6475;font-weight:700;">Anomaly Level</div>
<div class="t" style="left:160.30px;top:288.00px;font-size:9.3px;line-height:9.3px;color:#5c6475;font-weight:700;">Anomalous Data Transferred</div>
<div class="t" style="left:320.10px;top:288.00px;font-size:9.3px;line-height:9.3px;color:#5c6475;font-weight:700;">Anomaly Duration</div>
<div class="t" style="left:473.00px;top:288.00px;font-size:9.3px;line-height:9.3px;color:#5c6475;font-weight:700;">Source IP</div>
<div class="t" style="left:587.40px;top:288.00px;font-size:9.3px;line-height:9.3px;color:#5c6475;font-weight:700;">Source Site</div>
<div class="t" style="left:702.10px;top:288.00px;font-size:9.3px;line-height:9.3px;color:#5c6475;font-weight:700;">Source Port</div>
<div class="t" style="left:817.30px;top:288.00px;font-size:9.3px;line-height:9.3px;color:#5c6475;font-weight:700;">Destination IP</div>
<div class="t" style="left:931.60px;top:288.00px;font-size:9.3px;line-height:9.3px;color:#5c6475;font-weight:700;">Destination Site</div>
<div class="t" style="left:1046.30px;top:288.00px;font-size:9.3px;line-height:9.3px;color:#5c6475;font-weight:700;">Destination Port</div>
<div class="t" style="left:1161.00px;top:288.00px;font-size:9.3px;line-height:9.3px;color:#5c6475;font-weight:700;">Protocol</div>
<svg class="b" style="left:108.90px;top:286.50px" width="9" height="9" viewBox="0 0 9 9" fill="none"><circle cx="4.5" cy="4.5" r="4.0" stroke="#8a8e99" stroke-width="0.9"/><path d="M4.5 3.78V6.75" stroke="#8a8e99" stroke-width="1"/><circle cx="4.5" cy="2.43" r="0.6" fill="#8a8e99"/></svg>
<svg class="b" style="left:406.80px;top:286.50px" width="9" height="9" viewBox="0 0 9 9" fill="none"><circle cx="4.5" cy="4.5" r="4.0" stroke="#8a8e99" stroke-width="0.9"/><path d="M4.5 3.78V6.75" stroke="#8a8e99" stroke-width="1"/><circle cx="4.5" cy="2.43" r="0.6" fill="#8a8e99"/></svg>
<div class="b" style="left:1287.60px;top:143.50px;width:245.90px;height:816.50px;background:#fff;border-radius:2px;box-shadow:0 0 0 1px #eceef1, 0 -0.5px 0 0 #e6e8ec"></div>
<div class="b" style="left:1287.60px;top:143.50px;width:245.90px;height:46.50px;background:#fcfcfd;border-radius:3px 3px 0 0"></div>
<div class="b" style="left:1287.60px;top:189.60px;width:245.90px;height:1.00px;background:#eef0f3"></div>
<div class="t" style="left:1300.00px;top:160.00px;font-size:14.43px;line-height:14.43px;color:#2c2f3c;font-weight:400;">Select Data</div>
<svg class="b" style="left:1500.60px;top:164.10px" width="8" height="8" viewBox="0 0 8 8" fill="none"><path d="M0.6 0.6L7.4 7.4M7.4 0.6L0.6 7.4" stroke="#767a86" stroke-width="1.2"/></svg>
<div class="t" style="left:1300.00px;top:210.00px;font-size:9.5px;line-height:9.5px;color:#22253a;font-weight:700;">Flow Type</div>
<svg class="b" style="left:1353.00px;top:209.50px" width="9" height="9" viewBox="0 0 9 9" fill="none"><circle cx="4.5" cy="4.5" r="4.0" stroke="#8a8e99" stroke-width="0.9"/><path d="M4.5 3.78V6.75" stroke="#8a8e99" stroke-width="1"/><circle cx="4.5" cy="2.43" r="0.6" fill="#8a8e99"/></svg>
<svg class="b" style="left:1300.90px;top:233.10px" width="13" height="13" viewBox="0 0 13 13" fill="none"><circle cx="6.5" cy="6.5" r="5.9" stroke="#9ea2ac" stroke-width="0.9" fill="#fff"/></svg>
<div class="t" style="left:1318.60px;top:235.00px;font-size:11.24px;line-height:11.24px;color:#2c2f3c;font-weight:400;">Multiple Flows</div>
<svg class="b" style="left:1300.90px;top:252.30px" width="13" height="13" viewBox="0 0 13 13" fill="none"><circle cx="6.5" cy="6.5" r="5.9" stroke="#9ea2ac" stroke-width="0.9" fill="#fff"/></svg>
<div class="t" style="left:1318.60px;top:254.00px;font-size:11.24px;line-height:11.24px;color:#2c2f3c;font-weight:400;">Top 10 Flows</div>
<svg class="b" style="left:1300.90px;top:271.30px" width="13" height="13" viewBox="0 0 13 13" fill="none"><circle cx="6.5" cy="6.5" r="5.9" stroke="#3f66e0" stroke-width="1.1" fill="#fff"/><circle cx="6.5" cy="6.5" r="4" fill="#3f66e0"/></svg>
<div class="t" style="left:1318.60px;top:273.00px;font-size:11.24px;line-height:11.24px;color:#2c2f3c;font-weight:400;">Anomaly Flows</div>
<div class="b" style="left:1517.30px;top:840.80px;width:32.70px;height:67.00px;background:#fff;border-left:3px solid #3a5fe0;border-radius:3px 0 0 3px;box-sizing:border-box;box-shadow:-2px 0 6px rgba(0,0,0,0.06)"></div>
<svg class="b" style="left:1526.80px;top:851.70px" width="12" height="12" viewBox="0 0 12 12" fill="none"><circle cx="6" cy="6" r="5.4" stroke="#4a6ae0" stroke-width="0.9"/><path d="M4.4 4.6C4.4 3.6 5.1 3 6 3C6.9 3 7.6 3.6 7.6 4.4C7.6 5.4 6.2 5.6 6.2 6.8" stroke="#4a6ae0" stroke-width="0.9"/><circle cx="6.1" cy="8.6" r="0.55" fill="#4a6ae0"/></svg>
<div class="t" style="left:1513px;top:880.4px;width:40px;height:12px;text-align:center;font-size:12.2px;line-height:12px;color:#2f3340;transform:rotate(-90deg)">Help</div>
<svg class="b" style="left:110.50px;top:893.60px" width="12" height="16" viewBox="0 0 12 16" fill="none"><path d="M1.2 1V12.6L4 10L5.9 14.2L7.8 13.4L6 9.3H9.8Z" fill="#111" stroke="#fff" stroke-width="0.9"/></svg>
</body></html>
